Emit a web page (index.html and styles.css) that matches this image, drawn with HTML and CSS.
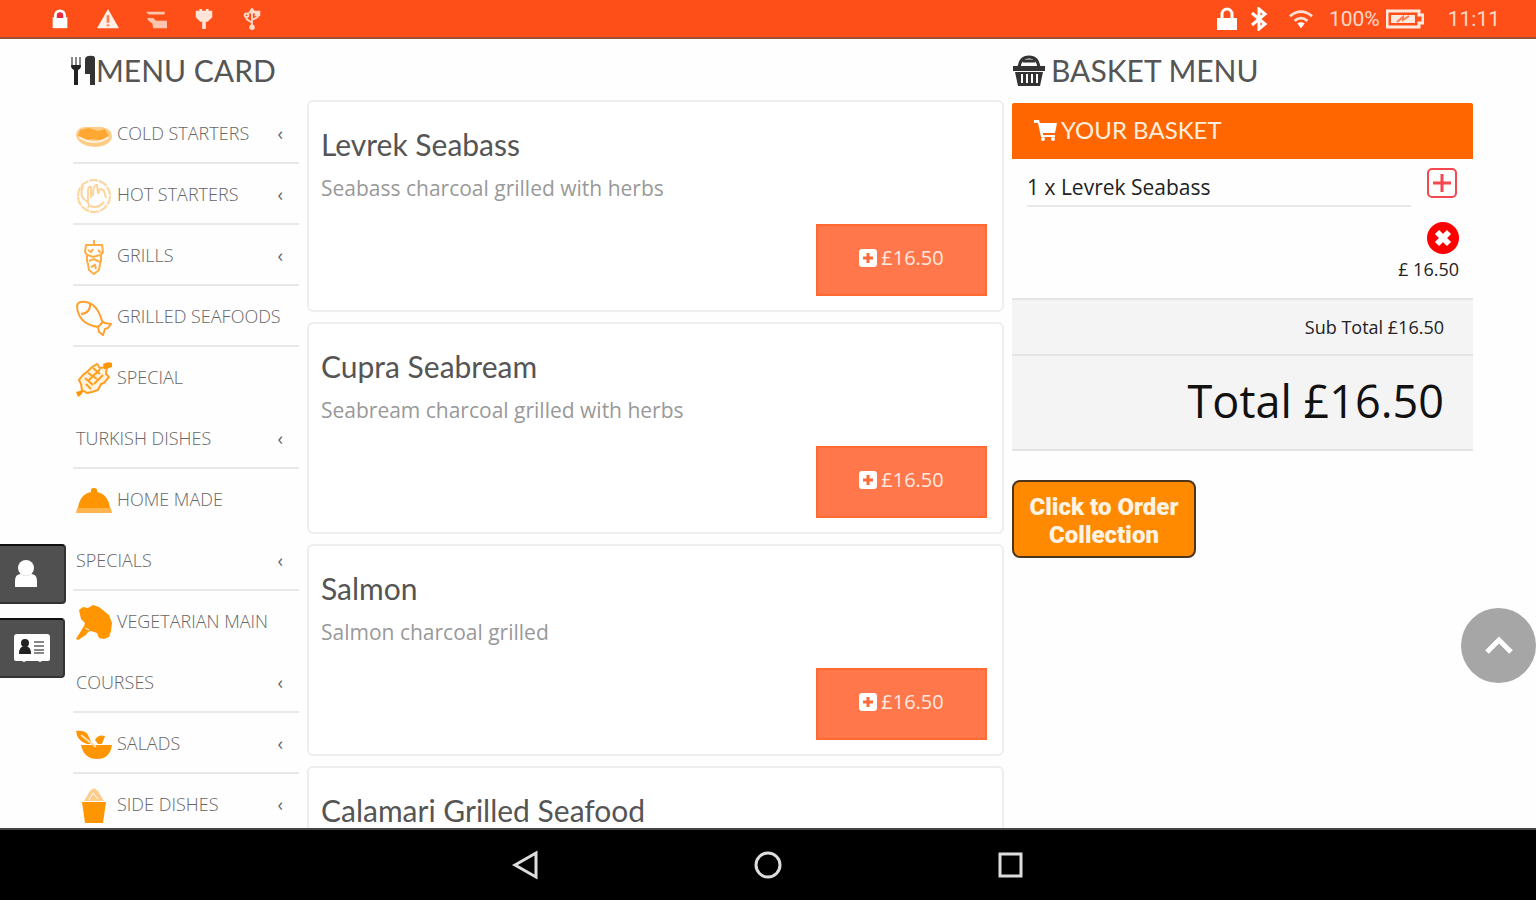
FILE: index.html
```
<!DOCTYPE html>
<html lang="en">

<head>
    <meta charset="UTF-8">
    <meta name="viewport" content="width=device-width, initial-scale=1.0">
    <title>Menu Card</title>
    <link rel="stylesheet" href="styles.css">
</head>

<body>
    <header class="status">
        <div class="status-left">
            <svg viewBox="0 0 24 24"><path d="M4 10h16v12H4z" fill="#fff"/><path d="M7 11V8a5 5 0 0 1 10 0v3" fill="#e8283c" stroke="#fff" stroke-width="3"/></svg>
            <svg viewBox="0 0 24 24"><path d="M12 1l12 21H0z" fill="#fff0e8"/><path d="M12 8v8M12 18v2" stroke="#ff7a50" stroke-width="3"/></svg>
            <svg viewBox="0 0 24 24" fill="#ffc4ae"><path d="M1 4h21l-1 3H4zM3 11h6l3 3h12v8H9l-1-5-5-4z"/></svg>
            <svg viewBox="0 0 24 24" fill="#ffe4d8"><path d="M7 1h3v2h4V1h3v2h4v7l-5 5h-2v8h-4v-8H8l-5-5V3h4z"/></svg>
            <svg viewBox="0 0 24 24" fill="none" stroke="#ffd9c9" stroke-width="2"><path d="M12 21V4M12 16l-6-4V9M12 13l6-3V7"/><path d="M12 1l3 4H9zM16 4h4v4h-4z" fill="#ffd9c9"/><circle cx="6" cy="8" r="2"/><circle cx="12" cy="21" r="2" fill="#ffd9c9"/></svg>
        </div>
        <div class="status-right">
            <svg class="lock" viewBox="0 0 20 24"><path d="M0 11h20v12H0z" fill="#fff"/><path d="M5 11V7a5 5 0 0 1 10 0v4" fill="none" stroke="#fff" stroke-width="3"/></svg>
            <svg class="bluetooth" viewBox="0 0 20 24"><path d="M3 6l13 11-6 5V2l6 5L3 18" fill="none" stroke="#fff" stroke-width="3"/></svg>
            <svg class="wifi" viewBox="0 0 28 24" fill="none" stroke="#ffe0d4" stroke-width="3"><path d="M2 9q12-10 24 0M7 14q7-6 14 0"/><path d="M10 17q4-3 8 0l-4 5z" fill="#fff" stroke="none"/></svg>
            <span class="percent">100%</span>
            <svg class="battery" viewBox="0 0 38 20"><path d="M1 2h32v4h4v8h-4v4H1z" fill="none" stroke="#ffe9df" stroke-width="3"/><path d="M5 6h24v8H5z" fill="#ffe9df"/><path d="M11 13l6-5v3l6-4" fill="none" stroke="#ff7a50" stroke-width="2"/></svg>
            <span class="clock">11:11</span>
        </div>
    </header>

    <main>
        <section class="menu">
            <h1>
                <svg class="cutlery" viewBox="0 0 26 32"><path d="M2 2v8q0 3 2 3h4q2 0 2-3V2" fill="none" stroke="#888" stroke-width="2"/><path d="M6 2v10" stroke="#888" stroke-width="2"/><path d="M1 10h10q0 4-3 5v15H4V15q-3-1-3-5z" fill="#222"/><path d="M15 4q1-4 8-3 2 0 2 3v26h-5V19h-5z" fill="#333"/></svg>MENU CARD
            </h1>
            <nav>
                <a href="#cold"><span><svg viewBox="0 0 36 36" fill="#ffcc85"><path d="M0 18q1-8 10-8h16q10 2 10 10-2 9-17 10Q2 29 0 18z"/><path d="M4 13l9-2 9 3 7-2 4 7-7 5-9-2-8 1-7-4z" fill="#ffa733"/><path d="M3 20q15 10 30 0" fill="none" stroke="#fff3e0" stroke-width="2"/></svg>COLD STARTERS</span><i>‹</i></a>
                <a href="#hot"><span><svg viewBox="0 0 36 36" fill="none" stroke="#ffd49b" stroke-width="2"><circle cx="18" cy="18" r="16" stroke-dasharray="9 1"/><path d="M7 8q-4 10 2 14t3 8M12 24V13q0-5 3-4v11M17 18q0-12 4-11l1 9M23 15q0-7 5-2l2 7M14 28q8 3 14-4"/></svg>HOT STARTERS</span><i>‹</i></a>
                <a href="#grills"><span><svg viewBox="0 0 36 36" fill="none" stroke="#ffae45" stroke-width="2"><path d="M18 1v5M10 6h16l1 7-2 3v6l-1 3-1 6-5 4-5-4-1-6-1-3v-6l-2-3z"/><path d="M12 11l3 2 2-3M22 11l3 3M12 16l5 2 7-2M13 22l5-2 6 3M15 28l4-2 1 4"/></svg>GRILLS</span><i>‹</i></a>
                <a href="#seafoods"><span><svg viewBox="0 0 36 36" fill="none" stroke="#ffa02e" stroke-width="2"><path d="M1 6Q2 1 9 2q12 1 17 19l3 2 6 1-3 4-3 1-2 6-4-3-1-5Q2 24 1 6z"/><path d="M5 14q10-1 9-11M22 27l5-5"/></svg>GRILLED SEAFOODS</span></a>
                <a href="#turkish"><span><svg viewBox="0 0 36 36"><path d="M2 34L34 3" stroke="#ff9500" stroke-width="3"/><path d="M16 6l5-3 3 4 7-1-1 7 3 3-5 6-3 1-3 6-6 2-5 1-5-3-1-6-2-4 4-5 4-3z" fill="#fff3e0" stroke="#ff9d1c" stroke-width="2"/><path d="M12 12l9 6M9 17l8 7M17 7l7 6M15 28l-5-5M20 12l-8 8M27 14l-9 9M24 8l-4 5" stroke="#ff9d1c" stroke-width="2"/><path d="M27 3q5-3 9-1v4q-5 2-8 2zM0 31l4-1 2 3-4 3z" fill="#ff9500"/></svg>SPECIAL<br>TURKISH DISHES</span><i>‹</i></a>
                <a href="#home"><span><svg viewBox="0 0 36 36"><path d="M2 25q2-14 13-16-1-4 3-4t3 4q11 2 13 16z" fill="#ff9500"/><path d="M1 25h34l1 5H0z" fill="#ffb54d"/></svg>HOME MADE<br>SPECIALS</span><i>‹</i></a>
                <a href="#vegetarian"><span><svg viewBox="0 0 36 36" fill="#ff9500"><path d="M3 5l4-3 5 1 5-3 6 2 5 4 5 4 3 8-1 8-2 6-5 2-5-1-2-5-6-2q-3 0-5 4l-8 5-2-1 8-13 1-3-4-4z"/><path d="M9 23l4 2" stroke="#fff" stroke-width="1"/></svg>VEGETARIAN MAIN<br>COURSES</span><i>‹</i></a>
                <a href="#salads"><span><svg viewBox="0 0 36 36" fill="#ff9500"><path d="M5 18h31q-2 14-15 14T5 18zM0 4q9-1 12 4l4 9h-5Q1 14 0 4z"/><path d="M19 13q3-6 10-4l-3 8h-4z"/><path d="M5 8l15 12" stroke="#ffe0b0" stroke-width="2"/></svg>SALADS</span><i>‹</i></a>
                <a href="#sides"><span><svg viewBox="0 0 36 36"><path d="M8 13l6-10 4-3 4 3 6 10z" fill="#ffcd8a"/><path d="M13 12l4-7 5 6" stroke="#fff" fill="none"/><path d="M6 14h24l-3 21H9z" fill="#ff9500"/></svg>SIDE DISHES</span><i>‹</i></a>
            </nav>
            <div class="dishes">
                <article>
                    <h2>Levrek Seabass</h2>
                    <p>Seabass charcoal grilled with herbs</p>
                    <button type="button"><svg viewBox="0 0 18 18"><rect width="18" height="18" rx="3" fill="#fff"/><path d="M9 4v10M4 9h10" stroke="#ff6a3a" stroke-width="3"/></svg>£16.50</button>
                </article>
                <article>
                    <h2>Cupra Seabream</h2>
                    <p>Seabream charcoal grilled with herbs</p>
                    <button type="button"><svg viewBox="0 0 18 18"><rect width="18" height="18" rx="3" fill="#fff"/><path d="M9 4v10M4 9h10" stroke="#ff6a3a" stroke-width="3"/></svg>£16.50</button>
                </article>
                <article>
                    <h2>Salmon</h2>
                    <p>Salmon charcoal grilled</p>
                    <button type="button"><svg viewBox="0 0 18 18"><rect width="18" height="18" rx="3" fill="#fff"/><path d="M9 4v10M4 9h10" stroke="#ff6a3a" stroke-width="3"/></svg>£16.50</button>
                </article>
                <article>
                    <h2>Calamari Grilled Seafood</h2>
                </article>
            </div>
        </section>

        <aside>
            <h1>
                <svg class="bag" viewBox="0 0 34 32"><path d="M7 13Q8 2 17 2t10 11" fill="none" stroke="#333" stroke-width="3"/><path d="M11 6h12" stroke="#333" stroke-width="3"/><path d="M1 11h32v5H1zM3 17h28l-3 14H6z" fill="#333"/><path d="M10 19v9M15 19v9M20 19v9M25 19v9" stroke="#fff" stroke-width="2"/></svg>BASKET MENU
            </h1>
            <h3><svg viewBox="0 0 24 22"><path d="M0 1h5l1 3h17l-2 10H9v2h12v2H7L4 4H0z" fill="#fff"/><circle cx="9" cy="20" r="2" fill="#fff"/><circle cx="19" cy="20" r="2" fill="#fff"/></svg>YOUR BASKET</h3>
            <div class="item">
                <div class="item-name">1 x Levrek Seabass</div>
                <div class="item-actions">
                    <button type="button" aria-label="Add one"><svg viewBox="0 0 32 32" fill="none" stroke="#f5474f"><rect x="1" y="1" width="28" height="28" rx="4" stroke-width="2"/><path d="M15 6v18M6 15h18" stroke-width="3"/></svg></button>
                    <button type="button" aria-label="Remove"><svg viewBox="0 0 32 32"><circle cx="16" cy="16" r="16" fill="#f00"/><path d="M10 10l12 12M22 10L10 22" stroke="#fff" stroke-width="6"/></svg></button>
                    <span>£ 16.50</span>
                </div>
            </div>
            <div class="subtotal">Sub Total £16.50</div>
            <div class="total">Total £16.50</div>
            <button class="order" type="button">Click to Order<br>Collection</button>
        </aside>
    </main>

    <div class="tabs">
        <button type="button" aria-label="Account"><svg viewBox="0 0 24 30" fill="#fff"><circle cx="12" cy="9" r="8"/><path d="M1 28v-6q0-7 6-7 5 4 10 0 6 0 6 7v6z"/></svg></button>
        <button class="contact" type="button" aria-label="Contact"><svg viewBox="0 0 36 28"><path d="M3 0h30q3 0 3 3v22q0 2-3 2h-5l-2 1-2-1H12l-2 1-2-1H3q-3 0-3-2V3q0-3 3-3z" fill="#fff"/><circle cx="11" cy="9" r="4" fill="#222"/><path d="M5 20q0-8 6-8t6 8z" fill="#222"/><path d="M20 8h10M20 12h10M20 16h10M20 19h10" stroke="#888" stroke-width="2"/></svg></button>
    </div>
    <button class="to-top" type="button" aria-label="Back to top"><svg viewBox="0 0 28 20"><path d="M2 16L14 4l12 12" fill="none" stroke="#fff" stroke-width="5"/></svg></button>

    <footer>
        <button type="button" aria-label="Back"><svg viewBox="0 0 30 30"><path d="M4 15L25 3v24z"/></svg></button>
        <button type="button" aria-label="Home"><svg viewBox="0 0 30 30"><circle cx="15" cy="15" r="12"/></svg></button>
        <button type="button" aria-label="Recent apps"><svg viewBox="0 0 30 30"><path d="M5 4h21v22H5z"/></svg></button>
    </footer>
</body>

</html>
```
FILE: styles.css
```
* {
    box-sizing: border-box;
}

body {
    margin: 0;
    height: 100vh;
    display: flex;
    flex-direction: column;
    overflow: hidden;
    background: #fefefe;
    font-family: "Open Sans", sans-serif;
}

h1, h2, h3, p {
    margin: 0;
    font-family: Lato, sans-serif;
    font-weight: 400;
}

button {
    padding: 0;
    border: 0;
    background: none;
    font-family: "Open Sans", sans-serif;
}

svg {
    display: block;
    flex: none;
}

.status {
    flex: none;
    height: 39px;
    display: flex;
    justify-content: space-between;
    background: #ff4f18;
    border-bottom: 2px solid #9a5236;
    color: #ffd9c9;
    font: 21px Roboto, sans-serif;
}

.status-left, .status-right {
    display: flex;
    align-items: center;
}

.status-left {
    gap: 24px;
    padding-left: 48px;
}

.status-left svg {
    width: 24px;
    height: 22px;
}

.status-right {
    padding-right: 36px;
}

.lock, .bluetooth {
    width: 20px;
    height: 24px;
    margin-right: 12px;
}

.wifi {
    width: 28px;
    height: 22px;
    margin: 0 14px 0 6px;
}

.battery {
    width: 38px;
    height: 20px;
    margin: 0 24px 0 6px;
}

main {
    flex: 1;
    min-height: 0;
    display: grid;
    grid-template-columns: 931fr 461fr;
    gap: 8px;
    padding: 12px 63px 0 73px;
    overflow: hidden;
}

.menu {
    display: grid;
    grid-template-columns: 226fr 697fr;
    grid-template-rows: 49px auto;
    column-gap: 8px;
    align-items: start;
}

h1 {
    grid-column: 1 / -1;
    height: 52px;
    display: flex;
    color: #555;
    font-size: 30px;
    line-height: 38px;
}

.cutlery {
    width: 26px;
    height: 32px;
    margin: 4px 0 0 -3px;
}

.bag {
    width: 34px;
    height: 32px;
    margin: 4px 5px 0 0;
}

nav {
    padding-top: 3px;
}

nav a {
    display: flex;
    justify-content: space-between;
    align-items: flex-end;
    padding: 0 16px 0 3px;
    box-shadow: inset 0 -2px #e8e8e8;
    color: #666;
    font-size: 18px;
    font-weight: 300;
    line-height: 61px;
    text-decoration: none;
    white-space: nowrap;
}

nav a:nth-child(4) {
    padding-right: 0;
}

nav svg {
    display: inline-block;
    width: 36px;
    height: 36px;
    margin-right: 5px;
    vertical-align: middle;
}

nav i {
    font-style: normal;
    font-weight: 400;
}

.dishes {
    display: flex;
    flex-direction: column;
    gap: 10px;
}

article {
    height: 212px;
    display: flex;
    flex-direction: column;
    padding: 22px 15px 14px 12px;
    border: 2px solid #eee;
    border-radius: 6px;
    background: #fff;
}

h2 {
    color: #555;
    font-size: 30px;
    line-height: 40px;
}

p {
    margin-top: 8px;
    color: #999;
    font-family: "Open Sans", sans-serif;
    font-size: 21px;
    line-height: 32px;
}

article button {
    width: 171px;
    height: 72px;
    margin: auto 0 0 auto;
    display: flex;
    align-items: center;
    justify-content: center;
    gap: 4px;
    padding-bottom: 5px;
    border: 2px solid #ff6a33;
    background: #ff774b;
    color: #ffe9e0;
    font-size: 20px;
}

article button svg {
    width: 18px;
    height: 18px;
}

aside {
    color: #222;
}

h3 {
    height: 56px;
    display: flex;
    align-items: center;
    gap: 3px;
    padding: 0 22px 3px;
    border-radius: 2px 2px 0 0;
    background: #ff6600;
    color: #ffeede;
    font-size: 24px;
}

h3 svg {
    width: 24px;
    height: 22px;
}

.item {
    display: flex;
    justify-content: space-between;
    height: 139px;
    padding: 9px 14px 0 15px;
}

.item-name {
    flex: 1;
    height: 39px;
    margin-right: 14px;
    border-bottom: 2px solid #e8e8e8;
    font-size: 21px;
    line-height: 38px;
}

.item-actions {
    width: 34px;
    display: flex;
    flex-direction: column;
    align-items: flex-end;
    font-size: 18px;
    line-height: 30px;
    white-space: nowrap;
}

.item-actions button {
    margin-bottom: 22px;
}

.item-actions button + button {
    margin-bottom: 0;
}

.item-actions svg {
    width: 32px;
    height: 32px;
}

.subtotal, .total {
    padding-right: 29px;
    border-top: 2px solid #e4e4e4;
    background: #f4f4f4;
    text-align: right;
}

.subtotal {
    font-size: 18px;
    line-height: 54px;
}

.total {
    padding-bottom: 3px;
    border-bottom: 2px solid #e4e4e4;
    color: #111;
    font-size: 45px;
    line-height: 90px;
}

.order {
    width: 184px;
    height: 78px;
    margin-top: 29px;
    padding-top: 3px;
    border: 2px solid #4d351c;
    border-radius: 8px;
    background: #ff8a00;
    color: #fff3e4;
    font: 900 24px/28px Roboto, sans-serif;
}

.tabs {
    position: fixed;
    left: 0;
    top: 544px;
}

.tabs button {
    display: flex;
    align-items: center;
    width: 66px;
    height: 60px;
    margin-bottom: 14px;
    padding-left: 14px;
    border: 2px solid #333;
    border-top-color: #111;
    border-left: 0;
    border-radius: 0 4px 4px 0;
    background: #505050;
}

.tabs svg {
    width: 24px;
    height: 30px;
}

.tabs .contact {
    width: 65px;
}

.tabs .contact svg {
    width: 36px;
    height: 28px;
}

.to-top {
    position: fixed;
    right: 0;
    top: 608px;
    width: 75px;
    height: 75px;
    border-radius: 50%;
    background: #a6a6a6;
}

.to-top svg {
    width: 28px;
    height: 20px;
    margin: 0 auto;
}

footer {
    flex: none;
    height: 72px;
    display: flex;
    justify-content: center;
    background: #000;
    border-top: 2px solid #444;
}

footer button {
    width: 242px;
}

footer svg {
    width: 30px;
    height: 30px;
    margin: 0 auto;
    fill: none;
    stroke: #ddd;
    stroke-width: 3px;
}
```
